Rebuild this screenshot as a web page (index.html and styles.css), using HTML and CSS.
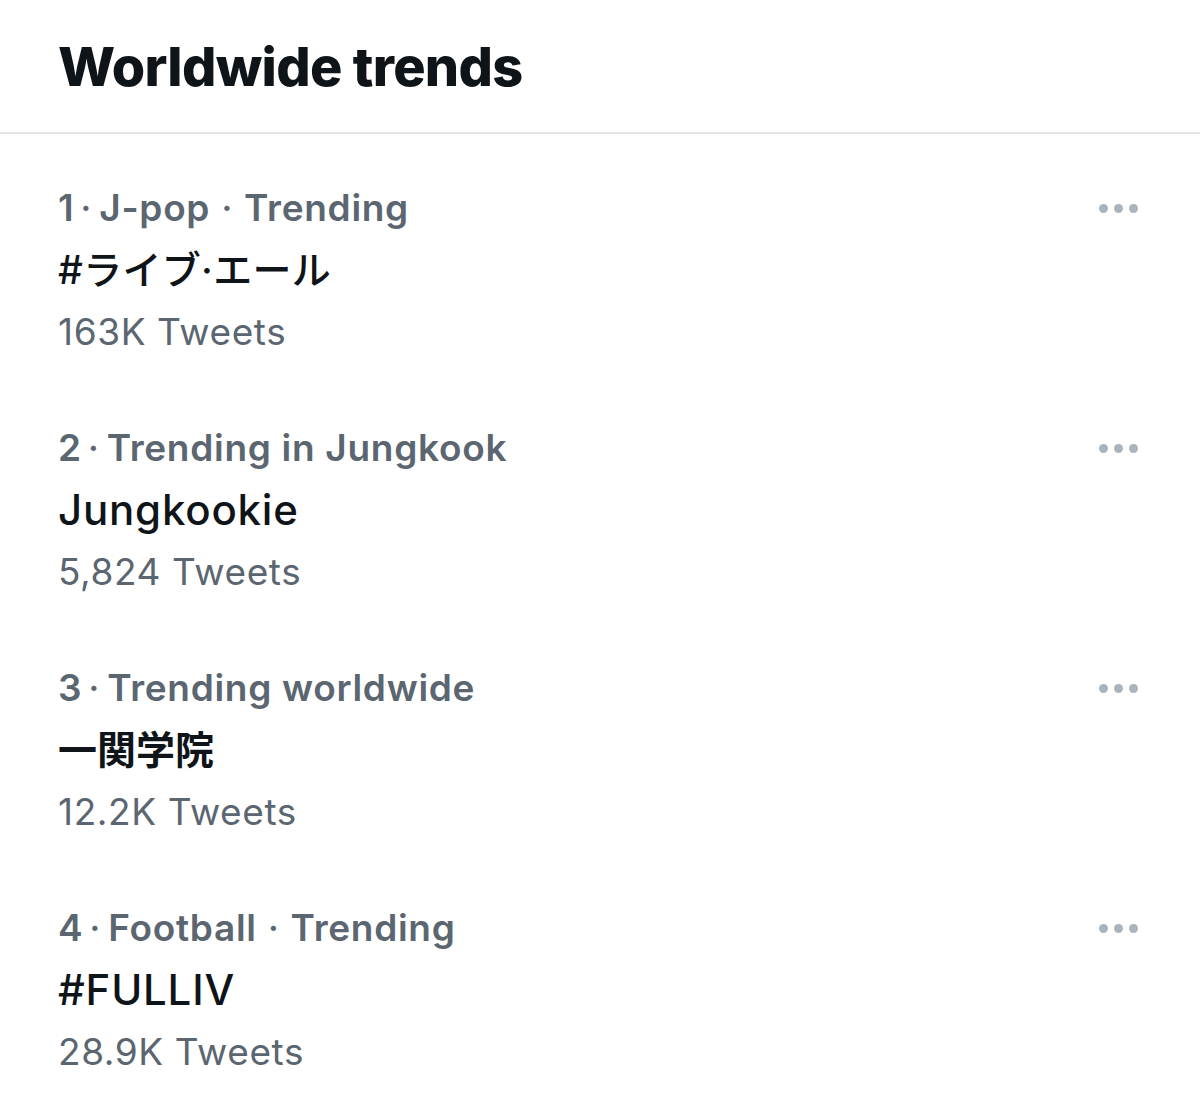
FILE: index.html
```html
<!DOCTYPE html>
<html>
<head>
<meta charset="utf-8">
<link rel="stylesheet" href="styles.css">
</head>
<body>
<div class="page">
  <header class="header">
    <h1 class="title">Worldwide trends</h1>
  </header>
  <ul class="trends">
    <li class="trend">
      <div class="trend-body">
        <div class="meta">1<span class="sep">·</span>J-pop<span class="sep2">·</span>Trending</div>
        <div class="name jp">#ライブ·エール</div>
        <div class="count">163K Tweets</div>
      </div>
      <div class="more"><span></span><span></span><span></span></div>
    </li>
    <li class="trend">
      <div class="trend-body">
        <div class="meta">2<span class="sep">·</span>Trending in Jungkook</div>
        <div class="name">Jungkookie</div>
        <div class="count">5,824 Tweets</div>
      </div>
      <div class="more"><span></span><span></span><span></span></div>
    </li>
    <li class="trend">
      <div class="trend-body">
        <div class="meta">3<span class="sep">·</span>Trending worldwide</div>
        <div class="name cjk">一関学院</div>
        <div class="count">12.2K Tweets</div>
      </div>
      <div class="more"><span></span><span></span><span></span></div>
    </li>
    <li class="trend">
      <div class="trend-body">
        <div class="meta">4<span class="sep">·</span>Football<span class="sep2">·</span>Trending</div>
        <div class="name">#FULLIV</div>
        <div class="count">28.9K Tweets</div>
      </div>
      <div class="more"><span></span><span></span><span></span></div>
    </li>
  </ul>
</div>
</body>
</html>
```

FILE: styles.css
```css
* { box-sizing: border-box; }
html, body {
  margin: 0;
  padding: 0;
  background: #ffffff;
}
body {
  font-family: Inter, "Noto Sans CJK JP", sans-serif;
  color: #0f1419;
}
.page {
  width: 1200px;
  height: 1115px;
  overflow: hidden;
}
.header {
  height: 134px;
  border-bottom: 2px solid #e3e6e9;
  padding-left: 58px;
  display: flex;
  align-items: flex-start;
}
.title {
  margin: 0;
  margin-top: 36px;
  font-size: 54px;
  font-weight: 800;
  line-height: 62px;
  letter-spacing: -0.7px;
  color: #0f1419;
}
.trends {
  list-style: none;
  margin: 0;
  padding: 43px 0 0 0;
}
.trend {
  height: 240px;
  padding-left: 58px;
  padding-right: 62px;
  display: flex;
  justify-content: space-between;
  align-items: flex-start;
}
.trend-body {
  display: flex;
  flex-direction: column;
}
.meta {
  font-size: 37px;
  font-weight: 600;
  line-height: 62px;
  letter-spacing: 0.7px;
  color: #5b6671;
}
.sep {
  margin: 0 7px 0 6px;
  font-weight: 500;
}
.sep2 {
  margin: 0 11px;
  font-weight: 500;
}
.name {
  font-size: 42px;
  font-weight: 500;
  line-height: 62px;
  letter-spacing: 0.8px;
  color: #0f1419;
}
.name.jp {
  font-size: 39px;
  letter-spacing: 0.3px;
}
.name.cjk {
  font-size: 39px;
  font-weight: 700;
  letter-spacing: 0;
}
.count {
  font-size: 37px;
  font-weight: 400;
  line-height: 62px;
  letter-spacing: 0.6px;
  color: #5b6671;
}
.more {
  display: flex;
  gap: 6px;
  margin-top: 27px;
}
.more span {
  width: 9px;
  height: 9px;
  border-radius: 50%;
  background: #aab4bd;
}
```
